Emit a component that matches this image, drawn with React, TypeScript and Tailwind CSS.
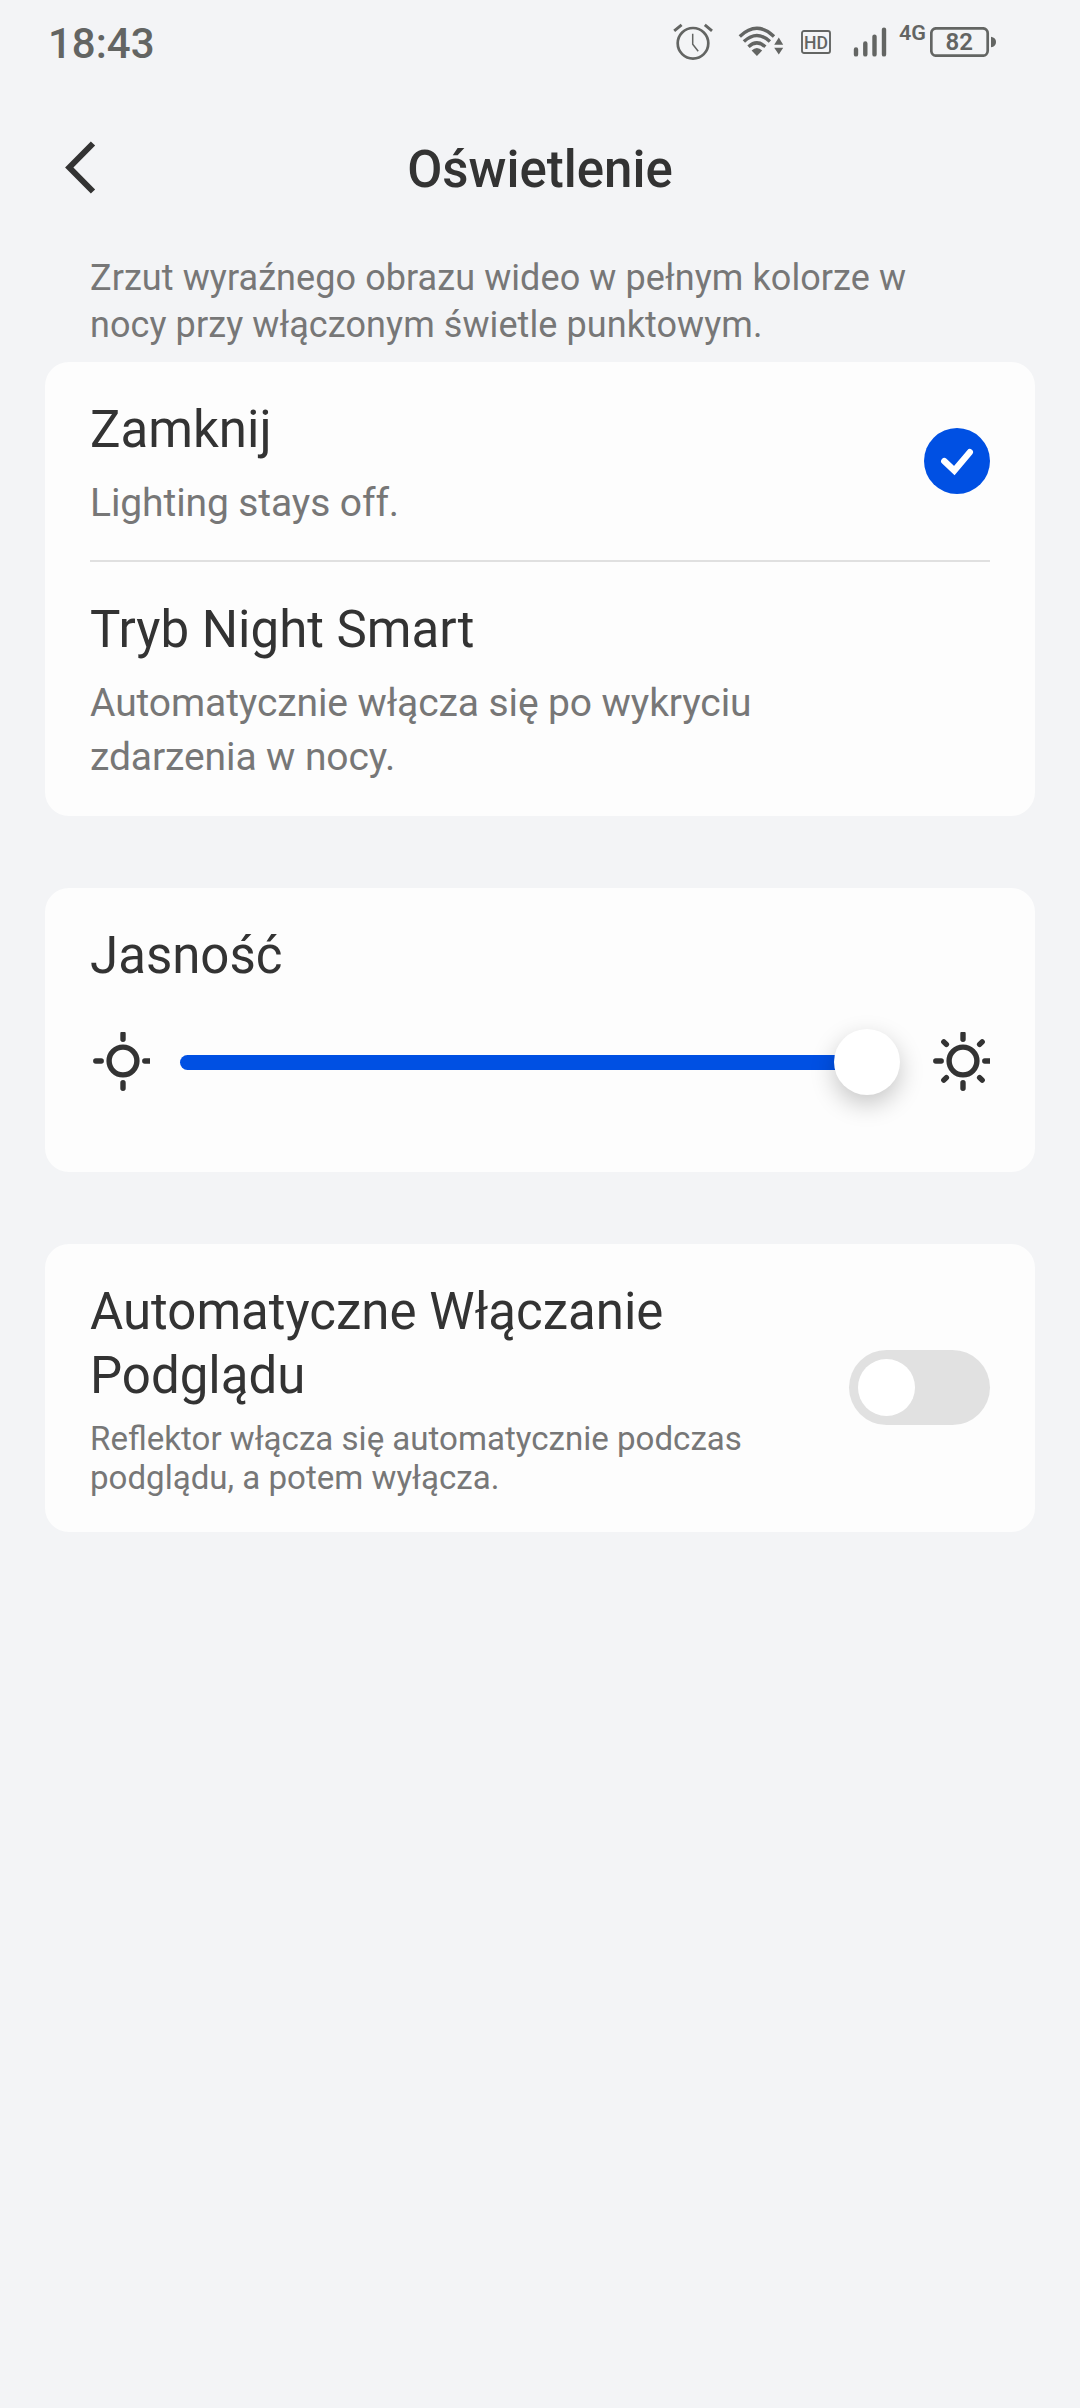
import React, { useState } from 'react';

interface LightMode {
  id: string;
  title: string;
  description: string;
}

const modes: LightMode[] = [
  { id: 'off', title: 'Zamknij', description: 'Lighting stays off.' },
  {
    id: 'smart',
    title: 'Tryb Night Smart',
    description: 'Automatycznie włącza się po wykryciu zdarzenia w nocy.',
  },
];

const AlarmIcon = () => (
  <svg className="w-10 h-10" viewBox="0 0 40 40" fill="none" stroke="currentColor">
    <circle cx="20" cy="21.3" r="15.3" strokeWidth="2.7" />
    <path d="M1.2 8.9L8.6 2.9M31.8 2.9L39 8.9" strokeWidth="2.9" />
    <path d="M19.7 11.8V22.3L25.2 29.3" strokeWidth="1.5" />
  </svg>
);

const WifiIcon = () => (
  <svg className="w-[46px] h-10" viewBox="0 0 46 40">
    <g fill="none" stroke="currentColor" strokeWidth="3.4">
      <path d="M1.8 14.4Q18.9 -1.8 36 14.4" />
      <path d="M5.9 19.6Q18.9 7.4 31.9 19.6" />
      <path d="M10.5 24.8Q18.9 17 27.3 24.8" />
    </g>
    <path d="M13.6 28.6Q18.9 23.6 24.2 28.6L18.9 34Z" fill="currentColor" />
    <path d="M36.2 22.8L40.8 15.6L45.2 22.8ZM36.2 25.8H45.2L40.8 32.6Z" fill="currentColor" />
  </svg>
);

const HdIcon = () => (
  <svg className="w-[30px] h-6" viewBox="0 0 30 24">
    <rect x="1" y="1" width="28" height="22" rx="2" fill="none" stroke="currentColor" strokeWidth="1.9" />
    <text x="3" y="18.5" textLength="24" lengthAdjust="spacingAndGlyphs" fontSize="18" fontWeight="500" fill="currentColor">
      HD
    </text>
  </svg>
);

const SignalIcon = () => (
  <svg className="w-[34px] h-[30px]" viewBox="0 0 34 30" stroke="currentColor" strokeWidth="4.4" strokeLinecap="round">
    <path d="M3 22.4V27.4M12.3 16.4V27.4M21.5 9.6V27.4M31 2.6V27.4" />
  </svg>
);

const BatteryIcon = ({ level }: { level: number }) => (
  <svg className="w-[66px] h-[30px]" viewBox="0 0 66 30">
    <rect x="1.3" y="1.3" width="56.4" height="27.4" rx="5" fill="none" stroke="currentColor" strokeWidth="2.7" />
    <path d="M61 9.7Q66 10.5 66 15Q66 19.5 61 20.3Z" fill="currentColor" />
    <text x="29.3" y="23.4" textAnchor="middle" fontSize="24" fontWeight="600" fill="currentColor">
      {level}
    </text>
  </svg>
);

const StatusBar = () => (
  <div className="h-[87px] pl-[48px] pr-[84px] flex items-center text-[#636563]">
    <span className="text-[42px] leading-none font-medium">18:43</span>
    <div className="ml-auto mb-[3px] flex items-center">
      <AlarmIcon />
      <div className="ml-[25px]">
        <WifiIcon />
      </div>
      <div className="ml-[17px]">
        <HdIcon />
      </div>
      <div className="ml-[22px]">
        <SignalIcon />
      </div>
      <svg className="ml-[12px] w-7 h-10" viewBox="0 0 28 40">
        <text x="0" y="18" textLength="27" lengthAdjust="spacingAndGlyphs" fontSize="19.5" fontWeight="600" fill="currentColor">
          4G
        </text>
      </svg>
      <div className="ml-[3px]">
        <BatteryIcon level={82} />
      </div>
    </div>
  </div>
);

// The glyph is 63 wide in a 60px box, so the right ray is cut off
const SunIcon = ({ bright = false }: { bright?: boolean }) => (
  <svg className="w-[60px] h-[60px] shrink-0" viewBox="0 0 60 60" fill="none" stroke="#333" strokeWidth="5.4">
    <circle cx="33" cy="29" r="13.9" />
    <path
      d="M33 1.8V7.2M33 50.8V56.2M5.8 29H11.2M54.8 29H62"
      strokeLinecap="round"
    />
    {bright && (
      <path
        d="M13.8 9.8L16.4 12.4M52.2 9.8L49.6 12.4M13.8 48.2L16.4 45.6M52.2 48.2L49.6 45.6"
        strokeLinecap="round"
      />
    )}
  </svg>
);

const Card = ({ className = '', children }: { className?: string; children: React.ReactNode }) => (
  <section className={`bg-[#fdfdfd] rounded-[24px] px-[45px] ${className}`}>{children}</section>
);

export default function App() {
  const [mode, setMode] = useState('off');
  const [preview, setPreview] = useState(false);

  return (
    <div className="w-[1080px] h-[2408px] bg-[#f3f4f6] text-[#333] font-[Roboto,sans-serif] overflow-hidden">
      <StatusBar />

      <header className="h-[165px] px-[60px] flex items-center justify-between">
        <svg className="w-[60px] h-[60px]" viewBox="0 0 60 60" fill="none" stroke="#333" strokeWidth="6">
          <path d="M33 3.5L9.3 27.5L33 51.5" />
        </svg>
        <h1 className="text-[51px] leading-[60px] font-medium">Oświetlenie</h1>
        <div className="w-[60px]"></div>
      </header>

      <main className="px-[45px] pt-[3px]">
        <p className="mx-[45px] mb-[13px] w-[840px] text-4xl leading-[47px] tracking-[0.08px] text-[#777]">
          Zrzut wyraźnego obrazu wideo w pełnym kolorze w nocy przy włączonym świetle punktowym.
        </p>

        <Card>
          {modes.map((item) => (
            <div
              key={item.id}
              onClick={() => setMode(item.id)}
              className="pt-[38px] pb-[30px] flex items-center justify-between border-b-2 border-[#e0e0e0] last:border-transparent"
            >
              <div className="w-[740px]">
                <h2 className="text-[51px] leading-[60px]">{item.title}</h2>
                <p className="mt-4 text-[39px] leading-[54px] tracking-[-0.1px] text-[#777]">{item.description}</p>
              </div>
              {mode === item.id && (
                <svg className="w-[66px] h-[66px] mt-[-8px]" viewBox="0 0 66 66" fill="none">
                  <circle cx="33" cy="33" r="33" fill="#0050e3" />
                  <path d="M20.3 33.2L30.3 42.5L45.8 24.2" stroke="#fff" strokeWidth="6.4" strokeLinecap="round" />
                </svg>
              )}
            </div>
          ))}
        </Card>

        <Card className="mt-[72px] pt-[38px] pb-[77px]">
          <h2 className="text-[51px] leading-[60px]">Jasność</h2>
          <div className="mt-[43px] h-[66px] flex items-center gap-[30px]">
            <SunIcon />
            <div className="flex-1 flex items-center">
              <div className="flex-1 h-[15px] -mr-[10px] rounded-l-full bg-[#0050e3]"></div>
              <div className="relative w-[66px] h-[66px] rounded-full bg-white shadow-[0_9px_24px_rgba(0,0,0,0.22)]"></div>
            </div>
            <SunIcon bright />
          </div>
        </Card>

        <Card className="mt-[72px] pt-[36px] pb-[35px] flex items-center justify-between">
          <div className="w-[680px]">
            <h2 className="text-[51px] leading-[64px]">Automatyczne Włączanie Podglądu</h2>
            <p className="mt-[11px] text-[33.1px] leading-[39px] text-[#777]">
              Reflektor włącza się automatycznie podczas podglądu, a potem wyłącza.
            </p>
          </div>
          <button
            onClick={() => setPreview(!preview)}
            className={`w-[141px] h-[75px] mb-[2px] px-[9px] rounded-full flex items-center ${preview ? 'bg-[#0050e3] justify-end' : 'bg-[#e1e1e1]'}`}
          >
            <span className="w-[57px] h-[57px] rounded-full bg-white"></span>
          </button>
        </Card>
      </main>
    </div>
  );
}
